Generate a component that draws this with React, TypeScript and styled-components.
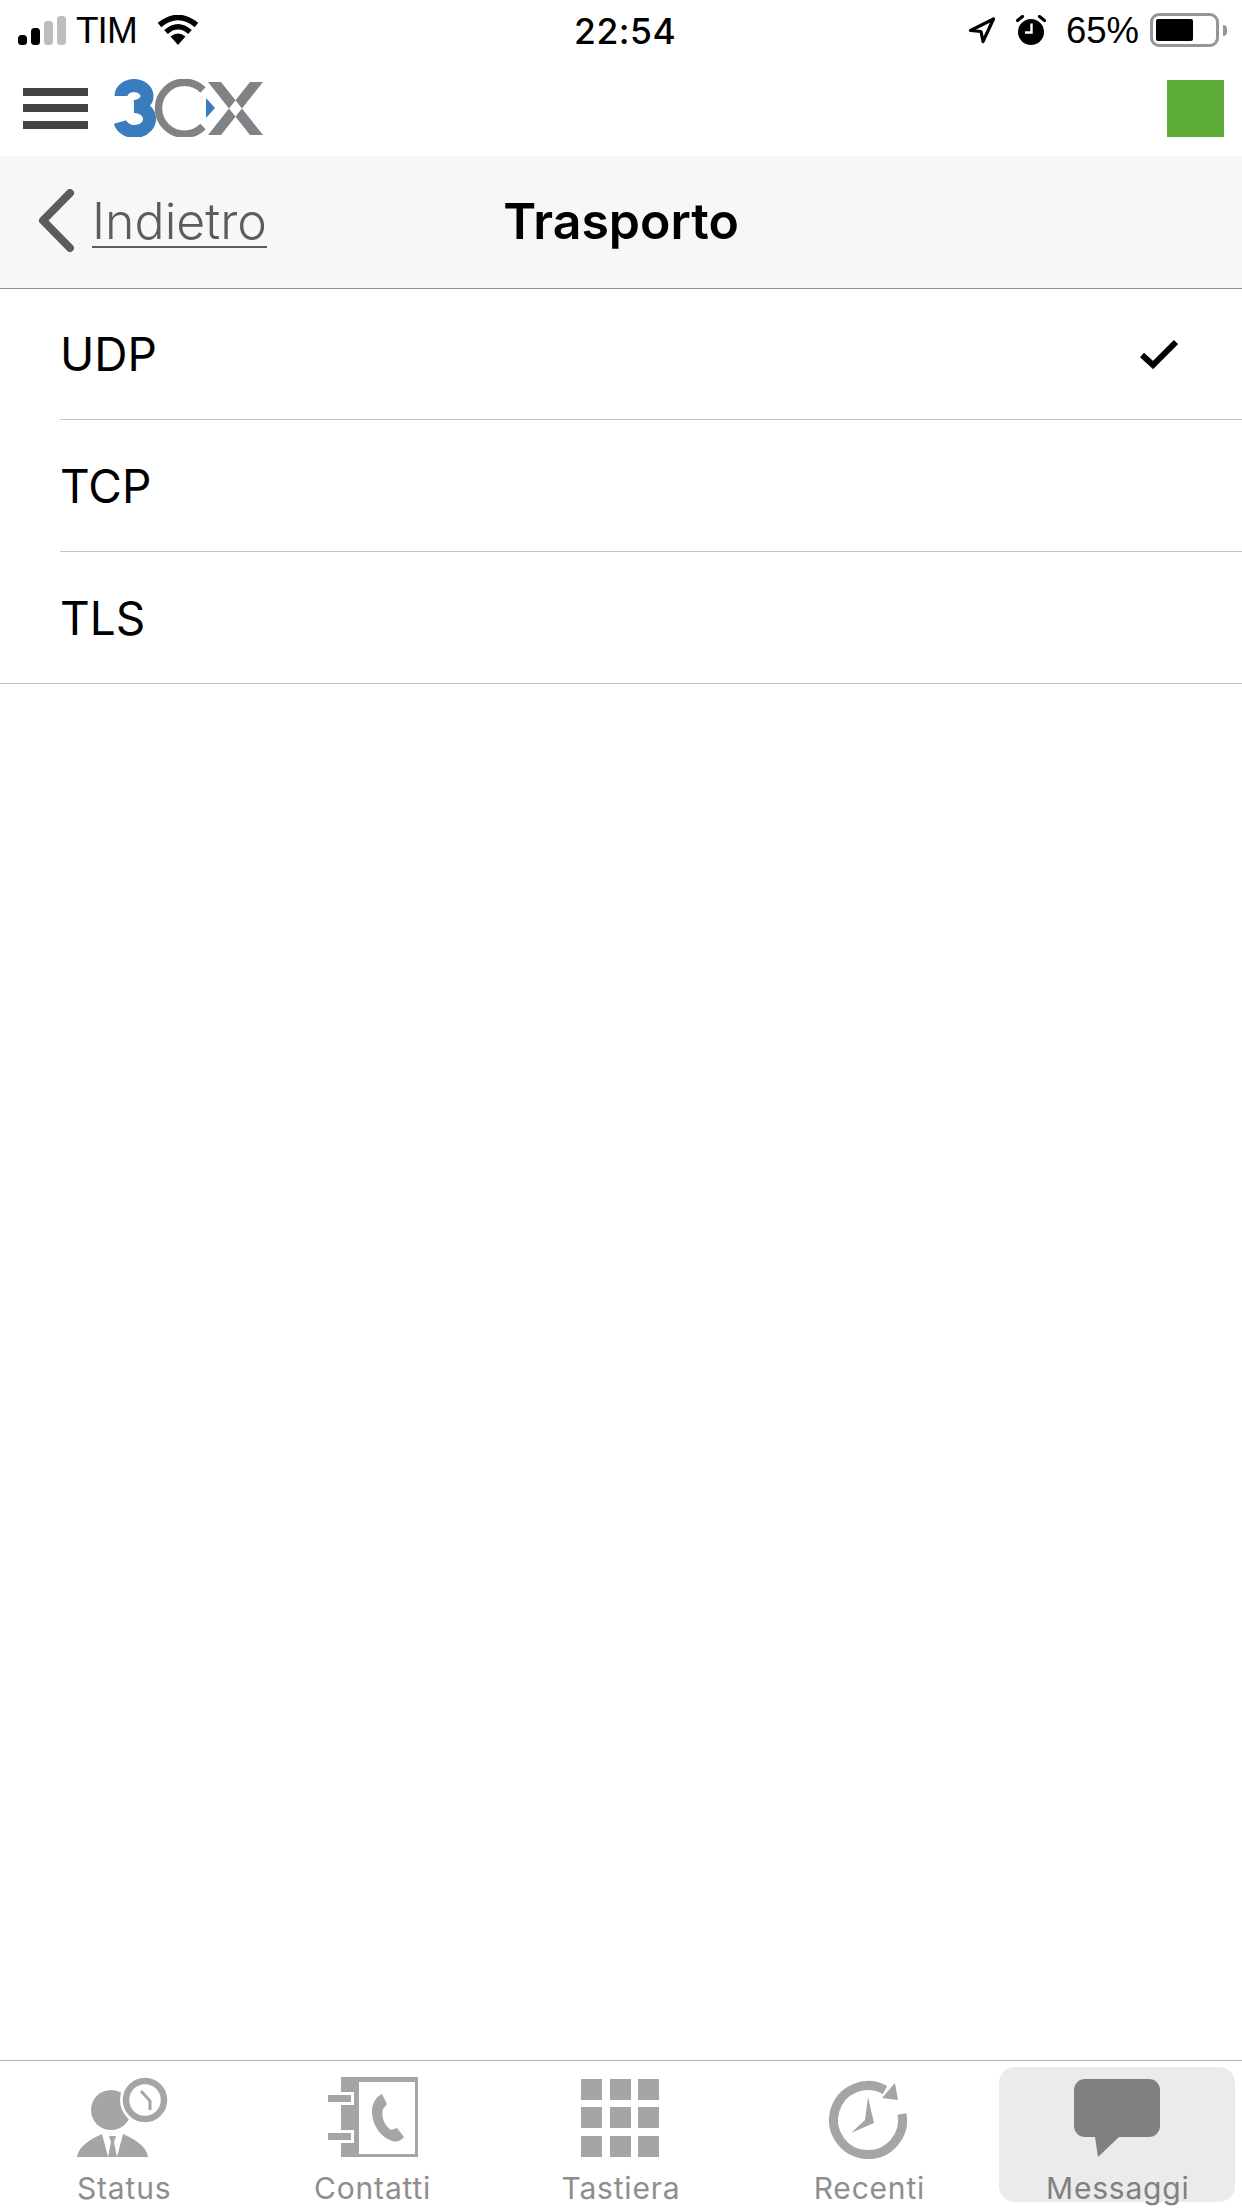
import styled, { createGlobalStyle } from 'styled-components';

const GlobalStyle = createGlobalStyle`
  html, body {
    margin: 0;
    padding: 0;
    background: #fff;
  }
  * {
    box-sizing: border-box;
  }
`;

const Page = styled.div`
  width: 1242px;
  height: 2208px;
  display: flex;
  flex-direction: column;
  overflow: hidden;
  background: #fff;
  color: #000;
  font-family: Inter, 'Liberation Sans', sans-serif;
`;

const StatusBar = styled.div`
  height: 60px;
  flex: none;
  display: flex;
  align-items: center;
  padding: 0 15px 0 18px;
  font-size: 37px;
`;

const StatusLeft = styled.div`
  width: 556px;
  display: flex;
  align-items: center;
`;

const Carrier = styled.span`
  margin-left: 10px;
  margin-right: 20px;
  padding-top: 2px;
  letter-spacing: -1px;
  font-family: 'Liberation Sans', sans-serif;
`;

const Clock = styled.span`
  padding-top: 2px;
  font-weight: 500;
  font-size: 35.5px;
  letter-spacing: 0.5px;
`;

const StatusRight = styled.div`
  margin-left: auto;
  display: flex;
  align-items: center;
  gap: 20px;
`;

const Percent = styled.span`
  margin-right: -9px;
  padding-top: 2px;
  font-size: 36.5px;
  font-family: 'Liberation Sans', sans-serif;
`;

const BatteryWrap = styled.div`
  display: flex;
  align-items: center;
`;

const Battery = styled.div`
  width: 69px;
  height: 34px;
  border: 3px solid #969696;
  border-radius: 9px;
  padding: 3px;
`;

const BatteryFill = styled.div`
  height: 100%;
  background: #000;
  border-radius: 2px;
`;

const BatteryNub = styled.div`
  width: 4px;
  height: 11px;
  margin-left: 4px;
  background: #969696;
  border-radius: 0 4px 4px 0;
`;

const Header = styled.header`
  height: 96px;
  flex: none;
  display: flex;
  align-items: center;
  padding: 0 18px 0 23px;
`;

const Burger = styled.div`
  width: 65px;
  display: flex;
  flex-direction: column;
  gap: 8.5px;
  margin-right: 26px;
`;

const BurgerBar = styled.div`
  height: 8px;
  background: #444;
`;

const StatusSquare = styled.div`
  width: 57px;
  height: 57px;
  margin-left: auto;
  background: #5dac37;
`;

const NavBar = styled.nav`
  height: 133px;
  flex: none;
  display: grid;
  grid-template-columns: 1fr auto 1fr;
  align-items: center;
  padding-bottom: 3px;
  background: #f7f7f7;
  border-bottom: 1px solid #8c8c8c;
`;

const BackLink = styled.a`
  display: flex;
  align-items: center;
  gap: 17px;
  padding-left: 38px;
  color: #5c5c5c;
  font-size: 50px;
  font-weight: 300;
`;

const BackText = styled.span`
  text-decoration: underline;
  text-decoration-thickness: 2px;
  text-underline-offset: 7px;
`;

const Title = styled.h1`
  margin: 0;
  font-size: 50px;
  font-weight: 600;
  color: #000;
`;

const OptionList = styled.ul`
  flex: 1;
  list-style: none;
  margin: 0;
  padding: 0;
`;

const Option = styled.li<{ $last?: boolean }>`
  height: 132px;
  display: flex;
  align-items: center;
  justify-content: space-between;
  padding: 0 64px 0 ${({ $last }) => ($last ? '60px' : '0')};
  margin-left: ${({ $last }) => ($last ? '0' : '60px')};
  border-bottom: 1px solid #c4c4c4;
  font-size: 46px;

  &:first-child {
    height: 131px;
  }
`;

const TabBar = styled.div`
  height: 148px;
  flex: none;
  display: grid;
  grid-template-columns: repeat(5, 1fr);
  border-top: 1px solid #b0b0b0;
`;

const Tab = styled.div<{ $active?: boolean }>`
  display: flex;
  flex-direction: column;
  align-items: center;
  padding-top: 9px;
  color: ${({ $active }) => ($active ? '#808080' : '#8e8e8e')};
  font-size: 30px;
  letter-spacing: 0.8px;
  position: relative;

  &::before {
    content: '';
    display: ${({ $active }) => ($active ? 'block' : 'none')};
    position: absolute;
    left: 5px;
    right: 7px;
    top: 6px;
    bottom: 6px;
    background: #ebebeb;
    border-radius: 16px;
  }
`;

const TabIcon = styled.svg`
  width: 110px;
  height: 95px;
  flex: none;
  position: relative;
`;

const TabLabel = styled.span`
  position: relative;
  margin-top: 5px;
  line-height: 36px;
`;

const ICON_GRAY = '#a5a5a5';

const SignalIcon = () => (
  <svg width="48" height="29" viewBox="0 0 48 29">
    <rect x="0" y="19" width="9" height="10" rx="3.5" fill="#000" />
    <rect x="13" y="12" width="9" height="17" rx="3.5" fill="#000" />
    <rect x="26" y="5" width="9" height="24" rx="3.5" fill="#bdbdbd" />
    <rect x="39" y="0" width="9" height="29" rx="3.5" fill="#bdbdbd" />
  </svg>
);

const WifiIcon = () => (
  <svg width="42" height="30" viewBox="0 0 42 30">
    <path d="M21 30 L13.5 21.5 Q21 15.5 28.5 21.5 Z" fill="#000" />
    <path d="M9 17 Q21 6.5 33 17" fill="none" stroke="#000" strokeWidth="5.5" />
    <path d="M2.5 10 Q21 -5 39.5 10" fill="none" stroke="#000" strokeWidth="5.5" />
  </svg>
);

const LocationIcon = () => (
  <svg width="28" height="28" viewBox="0 0 28 28">
    <path
      d="M2.5 14.5 L25.5 3 L15 25.5 L13 15.5 Z"
      fill="none"
      stroke="#000"
      strokeWidth="3.2"
      strokeLinejoin="round"
    />
  </svg>
);

const AlarmIcon = () => (
  <svg width="30" height="30" viewBox="0 0 30 30">
    <circle cx="15" cy="17" r="13" fill="#000" />
    <path d="M1.5 5.5 L6.5 1.5 M28.5 5.5 L23.5 1.5" stroke="#000" strokeWidth="3.2" strokeLinecap="round" />
    <path d="M15.5 8.5 V17.5 H9" fill="none" stroke="#fff" strokeWidth="2.4" />
  </svg>
);

const Logo = () => (
  <svg width="150" height="58" viewBox="0 0 150 58">
    <path
      d="M7 17 A13 10.5 0 1 1 20 27.5 A15 12.5 0 1 1 6 43"
      fill="none"
      stroke="#3a7dbf"
      strokeWidth="13"
    />
    <path
      d="M89 11 A26 26 0 1 0 89 47.5"
      fill="none"
      stroke="#808285"
      strokeWidth="7.5"
    />
    <path d="M92 19 L101 29 L92 39 Z" fill="#3a7dbf" />
    <path d="M94 3 H107 L149 56 H136 Z M149 3 H136 L94 56 H107 Z" fill="#808285" />
  </svg>
);

const BackChevron = () => (
  <svg width="37" height="63" viewBox="0 0 37 63">
    <path
      d="M32 4 L5 31.5 L32 59"
      fill="none"
      stroke="#5c5c5c"
      strokeWidth="8"
      strokeLinecap="round"
      strokeLinejoin="round"
    />
  </svg>
);

const CheckIcon = () => (
  <svg width="38" height="30" viewBox="0 0 38 30">
    <path d="M2 16 L13 26 L36 3" fill="none" stroke="#000" strokeWidth="6" />
  </svg>
);

const StatusIcon = () => (
  <TabIcon viewBox="0 0 110 95">
    <circle cx="42" cy="40" r="20" fill={ICON_GRAY} />
    <circle cx="76" cy="30" r="25" fill="#fff" />
    <circle cx="76" cy="30" r="19" fill="none" stroke={ICON_GRAY} strokeWidth="6.5" />
    <path d="M72 21 L81 31 L81 40" fill="none" stroke={ICON_GRAY} strokeWidth="3" />
    <path d="M8 87 C10 76 20 70 33 64 L39 87 Z" fill={ICON_GRAY} />
    <path d="M79 87 C77 76 67 70 54 64 L48 87 Z" fill={ICON_GRAY} />
    <path d="M40 66 H47 L45 72 L48 87 H39 L42 72 Z" fill={ICON_GRAY} />
  </TabIcon>
);

const ContactsIcon = () => (
  <TabIcon viewBox="0 0 110 95">
    <rect x="23" y="7" width="77" height="80" fill={ICON_GRAY} />
    <rect x="41" y="12" width="56" height="72" fill="#fff" />
    <rect x="8" y="22" width="28" height="13" fill="#fff" />
    <rect x="8" y="60" width="28" height="13" fill="#fff" />
    <rect x="10" y="25" width="23" height="7" fill={ICON_GRAY} />
    <rect x="10" y="63" width="23" height="7" fill={ICON_GRAY} />
    <path
      d="M64 24 L69 34 L65 39 C63 47 66 55 73 60 L79 58 L86 67 C82 72 78 72 74 71 C62 67 54 54 54 42 C54 33 58 27 64 24 Z"
      fill={ICON_GRAY}
    />
  </TabIcon>
);

const KEYPAD_COLUMNS = [15, 44, 72];
const KEYPAD_ROWS = [9, 37, 66];

const KeypadIcon = () => (
  <TabIcon viewBox="0 0 110 95">
    {KEYPAD_ROWS.map((y) =>
      KEYPAD_COLUMNS.map((x) => (
        <rect key={`${x}-${y}`} x={x} y={y} width="21" height="21" fill={ICON_GRAY} />
      )),
    )}
  </TabIcon>
);

const RecentIcon = () => (
  <TabIcon viewBox="0 0 110 95">
    <path
      d="M88 44 A34.5 34.5 0 1 1 71 20"
      fill="none"
      stroke={ICON_GRAY}
      strokeWidth="9"
    />
    <path d="M81 13 L84 30 L68 28 Z" fill={ICON_GRAY} />
    <path d="M54 27 L60 53 L37 63 L51 50 Z" fill={ICON_GRAY} />
  </TabIcon>
);

const MessageIcon = () => (
  <TabIcon viewBox="0 0 110 95">
    <path
      d="M22 9 H86 A11 11 0 0 1 97 20 V56 A11 11 0 0 1 86 67 H56 L35 87 L32 67 H22 A11 11 0 0 1 11 56 V20 A11 11 0 0 1 22 9 Z"
      fill="#808080"
    />
  </TabIcon>
);

const options = ['UDP', 'TCP', 'TLS'];

const tabs = [
  { label: 'Status', icon: <StatusIcon /> },
  { label: 'Contatti', icon: <ContactsIcon /> },
  { label: 'Tastiera', icon: <KeypadIcon /> },
  { label: 'Recenti', icon: <RecentIcon /> },
  { label: 'Messaggi', icon: <MessageIcon />, active: true },
];

const App = () => {
  return (
    <Page>
      <GlobalStyle />
      <StatusBar>
        <StatusLeft>
          <SignalIcon />
          <Carrier>TIM</Carrier>
          <WifiIcon />
        </StatusLeft>
        <Clock>22:54</Clock>
        <StatusRight>
          <LocationIcon />
          <AlarmIcon />
          <Percent>65%</Percent>
          <BatteryWrap>
            <Battery>
              <BatteryFill style={{ width: '65%' }} />
            </Battery>
            <BatteryNub />
          </BatteryWrap>
        </StatusRight>
      </StatusBar>
      <Header>
        <Burger>
          <BurgerBar />
          <BurgerBar />
          <BurgerBar />
        </Burger>
        <Logo />
        <StatusSquare />
      </Header>
      <NavBar>
        <BackLink>
          <BackChevron />
          <BackText>Indietro</BackText>
        </BackLink>
        <Title>Trasporto</Title>
      </NavBar>
      <OptionList>
        {options.map((name, i) => (
          <Option key={name} $last={i === options.length - 1}>
            {name}
            {i === 0 && <CheckIcon />}
          </Option>
        ))}
      </OptionList>
      <TabBar>
        {tabs.map(({ label, icon, active }) => (
          <Tab key={label} $active={active}>
            {icon}
            <TabLabel>{label}</TabLabel>
          </Tab>
        ))}
      </TabBar>
    </Page>
  );
};

export default App;
